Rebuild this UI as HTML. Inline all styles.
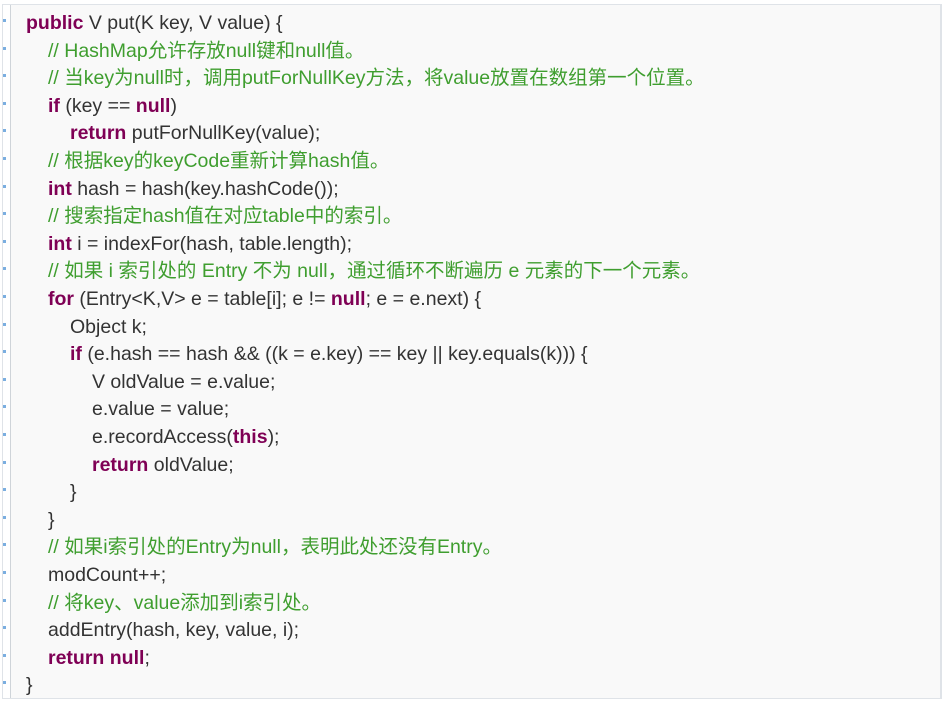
<!DOCTYPE html>
<html><head><meta charset="utf-8"><style>
html,body{margin:0;padding:0;background:#fff;width:944px;height:704px;overflow:hidden}
.box{position:absolute;left:2px;top:4px;width:937px;height:693px;border:1px solid #dfe3e8;border-right:2px solid #dfe3e8;background:#f9f9f9}
.gut{position:absolute;left:0;top:0;width:7px;height:693px;background:#fff;border-right:1px solid #cfd4d9}
.dot{position:absolute;left:0px;width:3px;height:3px;background:#7aaee0}
.code{position:absolute;left:0;top:5px;font-family:"Liberation Sans","Noto Sans CJK SC",sans-serif;font-size:19.5px;color:#333;white-space:pre}
.l{position:absolute;height:27.6px;line-height:27.6px;white-space:pre}
.k{color:#7f0055;font-weight:bold}
.c{color:#3f9e2f}
</style></head><body>
<div class="box">
<div class="gut" id="g"></div>
<div class="code">
<div class="l" style="top:0;left:23px"><span class="k">public</span> V put(K key, V value) {</div>
<div class="l" style="top:27.6px;left:45px"><span class="c">// HashMap允许存放null键和null值。</span></div>
<div class="l" style="top:55.2px;left:45px"><span class="c">// 当key为null时，调用putForNullKey方法，将value放置在数组第一个位置。</span></div>
<div class="l" style="top:82.8px;left:45px"><span class="k">if</span> (key == <span class="k">null</span>)</div>
<div class="l" style="top:110.4px;left:67px"><span class="k">return</span> putForNullKey(value);</div>
<div class="l" style="top:138px;left:45px"><span class="c">// 根据key的keyCode重新计算hash值。</span></div>
<div class="l" style="top:165.6px;left:45px"><span class="k">int</span> hash = hash(key.hashCode());</div>
<div class="l" style="top:193.2px;left:45px"><span class="c">// 搜索指定hash值在对应table中的索引。</span></div>
<div class="l" style="top:220.8px;left:45px"><span class="k">int</span> i = indexFor(hash, table.length);</div>
<div class="l" style="top:248.4px;left:45px"><span class="c">// 如果 i 索引处的 Entry 不为 null，通过循环不断遍历 e 元素的下一个元素。</span></div>
<div class="l" style="top:276px;left:45px"><span class="k">for</span> (Entry&lt;K,V&gt; e = table[i]; e != <span class="k">null</span>; e = e.next) {</div>
<div class="l" style="top:303.6px;left:67px">Object k;</div>
<div class="l" style="top:331.2px;left:67px"><span class="k">if</span> (e.hash == hash &amp;&amp; ((k = e.key) == key || key.equals(k))) {</div>
<div class="l" style="top:358.8px;left:89px">V oldValue = e.value;</div>
<div class="l" style="top:386.4px;left:89px">e.value = value;</div>
<div class="l" style="top:414px;left:89px">e.recordAccess(<span class="k">this</span>);</div>
<div class="l" style="top:441.6px;left:89px"><span class="k">return</span> oldValue;</div>
<div class="l" style="top:469.2px;left:67px">}</div>
<div class="l" style="top:496.8px;left:45px">}</div>
<div class="l" style="top:524.4px;left:45px"><span class="c">// 如果i索引处的Entry为null，表明此处还没有Entry。</span></div>
<div class="l" style="top:552px;left:45px">modCount++;</div>
<div class="l" style="top:579.6px;left:45px"><span class="c">// 将key、value添加到i索引处。</span></div>
<div class="l" style="top:607.2px;left:45px">addEntry(hash, key, value, i);</div>
<div class="l" style="top:634.8px;left:45px"><span class="k">return</span> <span class="k">null</span>;</div>
<div class="l" style="top:662.4px;left:23px">}</div>
</div>
</div>
<script>
var g=document.getElementById('g');
for(var i=0;i<25;i++){var d=document.createElement('div');d.className='dot';d.style.top=(18+i*27.6-4)+'px';g.appendChild(d);}
</script>
</body></html>
